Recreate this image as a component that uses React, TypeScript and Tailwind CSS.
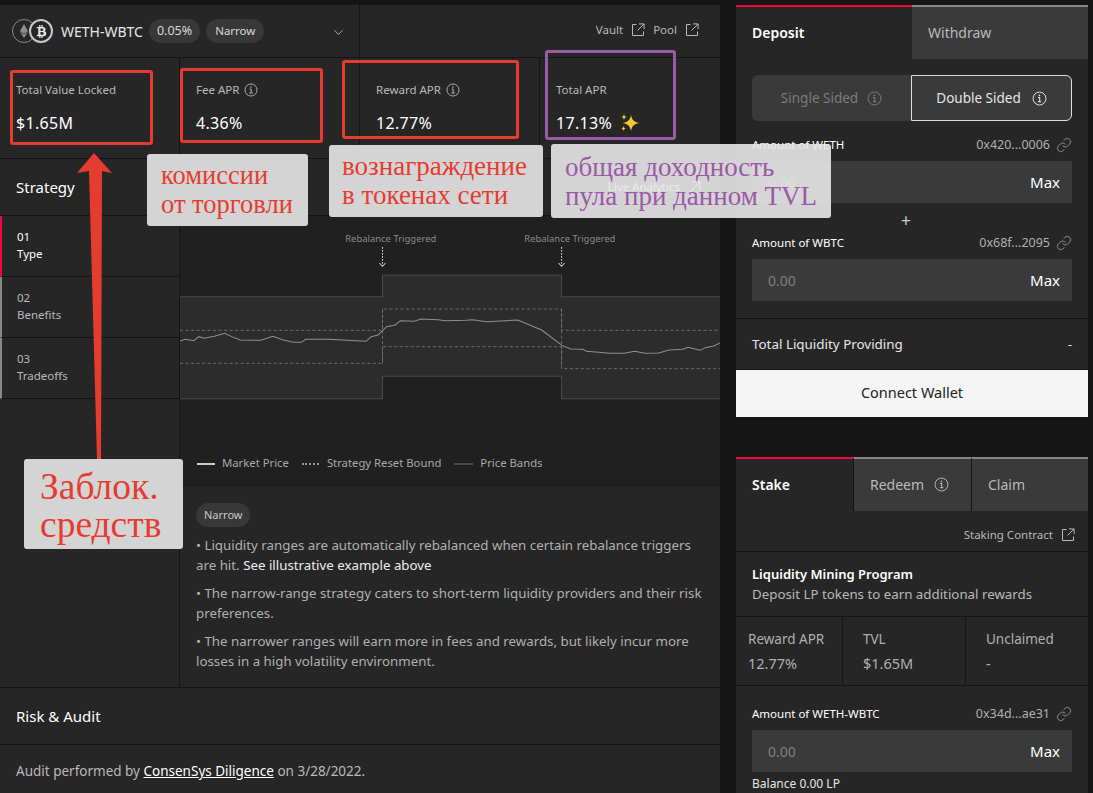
import { Link, ChevronDown } from 'lucide-react';
import { FaBtc, FaEthereum } from 'react-icons/fa';

function InfoIcon({ className = 'h-[14px] w-[14px]' }: { className?: string }) {
  return (
    <svg viewBox="0 0 16 16" fill="none" stroke="currentColor" className={`shrink-0 ${className}`}>
      <circle cx="8" cy="8" r="6.9" strokeWidth="1" />
      <path d="M6.4 7h1.8v4.2M6.2 11.4h3.8" strokeWidth="1.1" />
      <circle cx="7.9" cy="4.6" r="0.9" fill="currentColor" stroke="none" />
    </svg>
  );
}

function LaunchIcon() {
  return (
    <svg viewBox="0 0 14 14" fill="none" stroke="currentColor" strokeWidth="1" className="h-[14px] w-[14px] shrink-0">
      <path d="M5.5 1.5h-4v11h11v-4M8 .9h5.1V6M13 1 6.5 7.5" />
    </svg>
  );
}

function Sparkles() {
  return (
    <svg viewBox="0 0 22 20" className="h-[20px] w-[22px]">
      <path d="M12 2c1 5 3 7 8 8-5 1-7 3-8 8-1-5-3-7-8-8 5-1 7-3 8-8z" fill="#fbc531" />
      <path d="M5 1c.4 2 1 2.700 3 3-2 .4-2.600 1-3 3-.4-2-1-2.600-3-3 2-.3 2.600-1 3-3z" fill="#fbc531" />
      <path d="M4.500 13c.4 1.700.9 2.200 2.500 2.500-1.600.4-2.100.9-2.500 2.500-.4-1.600-.9-2.100-2.500-2.500 1.600-.3 2.100-.8 2.500-2.500z" fill="#fbc531" />
    </svg>
  );
}

function Stat({ label, value, info, extra, className = '' }: { label: string; value: string; info?: boolean; extra?: boolean; className?: string }) {
  return (
    <div className={`h-full w-[180px] border-r border-[#151515] pl-[16px] pt-[23px] ${className}`}>
      <div className="flex h-[18px] items-center gap-[5px] text-[11.5px] text-[#b9b9b9]">
        {label}
        {info && <InfoIcon />}
      </div>
      <div className="mt-[14px] flex h-[20px] items-center gap-[7px] text-[16px] tracking-[0.3px] text-white">
        {value}
        {extra && <Sparkles />}
      </div>
    </div>
  );
}

function Step({ n, label, active }: { n: string; label: string; active?: boolean }) {
  return (
    <div className={`h-[61px] border-b border-b-[#151515] border-l-2 pl-[15px] pt-[12px] text-[11.5px] leading-[17px] ${active ? 'border-l-[#f0083c] text-white' : 'border-l-[#888888] text-[#b9b9b9]'}`}>
      <div>{n}</div>
      <div>{label}</div>
    </div>
  );
}

function Tab({ label, active, info, className }: { label: string; active?: boolean; info?: boolean; className: string }) {
  return (
    <div className={`flex h-[54px] items-center gap-[10px] border-t-2 px-4 pb-[2px] text-[14px] ${active ? 'border-t-[#f0083c] font-semibold text-white' : 'border-t-[#888888] bg-[#3a3a3a] text-[#b9b9b9]'} ${className}`}>
      {label}
      {info && <InfoIcon className="h-[15px] w-[15px]" />}
    </div>
  );
}

function Amount({ label, address }: { label: string; address: string }) {
  return (
    <div>
      <div className="flex h-[18px] items-center justify-between text-[11.5px] text-white">
        <span>{label}</span>
        <span className="flex items-center gap-[6px] text-[12.5px] text-[#b0b0b0]">
          {address}
          <Link size={16} strokeWidth={1.1} />
        </span>
      </div>
      <div className="mt-[7px] flex h-[42px] items-center justify-between bg-[#3a3a3a] pl-4 pr-3 text-[14px]">
        <span className="text-[#808080]">0.00</span>
        <span className="text-[15px] text-white">Max</span>
      </div>
    </div>
  );
}

function Chart() {
  const price =
    'M0 348L15 343L40 347L55 335L70 340L100 334L130 325L150 335L175 345L235 346L270 334L300 345L330 352L352 352L365 343L430 343L540 349L555 335L575 330L600 305L625 300L640 287L680 289L700 282L750 284L770 287L830 286L850 284L890 290L980 285L1010 298L1050 315L1110 362L1135 372L1170 373L1180 379L1250 385L1290 385L1320 379L1350 385L1390 384L1420 375L1460 373L1475 367L1510 376L1525 368L1550 363L1568 354';
  return (
    <svg viewBox="0 -27 1568 672" preserveAspectRatio="none" className="block h-[224px] w-[540px]" fill="none">
      <path d="M0 215H588V151H1108V215H1568V521H1108V454H588V521H0Z" fill="#2c2c2c" />
      <path d="M0 215H588V151H1108V215H1568M0 521H588V454H1108V521H1568" stroke="#4a4a4a" strokeWidth="3" />
      <path d="M0 316H588V252H1108V316H1568M0 415H588V365H1108V431H1568M588 252V415M1108 252V431" stroke="#777777" strokeWidth="2.500" strokeDasharray="9 7" />
      <path d={price} stroke="#8f8f8f" strokeWidth="3" />
      <path d="M588 66V122M1108 66V122" stroke="#cccccc" strokeWidth="3" strokeDasharray="5 4" />
      <path d="M579 114L588 124L597 114M1099 114L1108 124L1117 114" stroke="#cccccc" strokeWidth="3" />
      <text x="612" y="52" textAnchor="middle" fill="#8a8a8a" fontSize="27.500">Rebalance Triggered</text>
      <text x="1132" y="52" textAnchor="middle" fill="#8a8a8a" fontSize="27.500">Rebalance Triggered</text>
    </svg>
  );
}

function Legend() {
  return (
    <div className="flex h-[47px] items-center gap-[13px] pl-[17px] text-[11.3px] text-[#a8a8a8]">
      <span className="flex items-center gap-[7px]"><i className="h-[2px] w-[18px] bg-[#cccccc]" />Market Price</span>
      <span className="flex items-center gap-[8px]"><i className="w-[17px] border-t-2 border-dotted border-[#999999]" />Strategy Reset Bound</span>
      <span className="flex items-center gap-[7px]"><i className="h-[2px] w-[19px] bg-[#4a4a4a]" />Price Bands</span>
    </div>
  );
}

export default function App() {
  return (
    <div className="relative flex h-[793px] w-[1093px] overflow-hidden bg-[#151515] pt-[5px] font-['Noto_Sans',sans-serif]">
      <div className="w-[720px] shrink-0 bg-[#262626]">
        <div className="flex h-[53px] border-b border-[#151515]">
          <div className="flex w-[360px] items-center border-r border-[#151515] pl-[12px] pr-[13px]">
            <div className="relative h-[24px] w-[41px]">
              <span className="absolute left-0 flex h-[24px] w-[24px] items-center justify-center rounded-full border border-[#8a8a8a] bg-[#262626] text-[#8c8c8c]"><FaEthereum size={14} /></span>
              <span className="absolute left-[17px] flex h-[24px] w-[24px] items-center justify-center rounded-full border-2 border-double border-[#c8c8c8] bg-[#262626] text-[#e6e6e6]"><FaBtc size={13} /></span>
            </div>
            <span className="ml-[8px] text-[14px] text-[#e6e6e6]">WETH-WBTC</span>
            <span className="ml-[6px] rounded-full bg-[#383838] px-[8px] py-[3px] text-[12.5px] leading-[18px] text-[#d8d8d8]">0.05%</span>
            <span className="ml-[6px] rounded-full bg-[#383838] px-[9px] py-[3px] text-[11.5px] leading-[18px] text-[#d8d8d8]">Narrow</span>
            <ChevronDown size={15} strokeWidth={1.3} className="ml-auto mt-[3px] text-[#cccccc]" />
          </div>
          <div className="flex flex-1 items-center justify-end gap-[8px] pb-[2px] pr-[21px] text-[11.5px] text-[#b9b9b9]">
            <span>Vault</span>
            <LaunchIcon />
            <span>Pool</span>
            <LaunchIcon />
          </div>
        </div>

        <div className="flex h-[101px] border-b border-[#151515]">
          <Stat label="Total Value Locked" value="$1.65M" />
          <Stat label="Fee APR" value="4.36%" info />
          <Stat label="Reward APR" value="12.77%" info />
          <Stat label="Total APR" value="17.13%" extra className="border-r-0" />
        </div>

        <div className="flex h-[57px] items-center justify-between border-b border-[#151515] pl-[16px] pr-[19px]">
          <span className="text-[15px] text-white">Strategy</span>
          <span className="flex items-center gap-[9px] text-[11.5px] text-white">
            Live Analytics
            <svg viewBox="0 0 12 12" fill="none" stroke="currentColor" strokeWidth="1" className="h-[12px] w-[12px]"><path d="M1 11 11 1M3.500 1H11V8.500" /></svg>
          </span>
        </div>

        <div className="flex h-[472px] border-b border-[#151515]">
          <div className="w-[180px] shrink-0 border-r border-[#151515]">
            <Step n="01" label="Type" active />
            <Step n="02" label="Benefits" />
            <Step n="03" label="Tradeoffs" />
          </div>
          <div className="flex flex-1 flex-col">
            <div className="bg-[#202020]">
              <Chart />
              <Legend />
            </div>
            <div className="flex-1 px-[16px] pt-[16px] text-[13.3px] leading-[20px] text-[#b0b0b0]">
              <span className="inline-block rounded-full bg-[#383838] px-[8px] py-[3px] text-[11px] leading-[18px] text-[#c8c8c8]">Narrow</span>
              <p className="mt-[8px]">• Liquidity ranges are automatically rebalanced when certain rebalance triggers are hit. <span className="text-[#eeeeee]">See illustrative example above</span></p>
              <p className="mt-[8px]">• The narrow-range strategy caters to short-term liquidity providers and their risk preferences.</p>
              <p className="mt-[8px]">• The narrower ranges will earn more in fees and rewards, but likely incur more losses in a high volatility environment.</p>
            </div>
          </div>
        </div>

        <div className="flex h-[57px] items-center border-b border-[#151515] pl-[16px] text-[15px] text-white">Risk &amp; Audit</div>
        <div className="pl-[16px] pt-[16px] text-[13.5px] leading-[20px] text-[#b9b9b9]">
          Audit performed by <span className="text-white underline">ConsenSys Diligence</span> on 3/28/2022.
        </div>
      </div>

      <div className="ml-[16px] flex w-[352px] shrink-0 flex-col gap-[40px]">
        <div className="bg-[#262626]">
          <div className="flex">
            <Tab label="Deposit" active className="w-[176px]" />
            <Tab label="Withdraw" className="w-[176px]" />
          </div>
          <div className="px-4 pt-4">
            <div className="flex h-[46px] rounded-md bg-[#3a3a3a] text-[13.5px]">
              <div className="flex flex-1 items-center justify-center gap-[9px] text-[#7c7c7c]">Single Sided <InfoIcon className="h-[15px] w-[15px]" /></div>
              <div className="flex w-[161px] items-center justify-center gap-[11px] rounded-r-md border border-[#dddddd] text-[#e6e6e6]">Double Sided <InfoIcon className="h-[15px] w-[15px]" /></div>
            </div>
            <div className="mt-[15px]"><Amount label="Amount of WETH" address="0x420...0006" /></div>
            <div className="flex h-[31px] items-center justify-center pr-[12px] pt-[2px] text-[18px] leading-none text-[#cccccc]">+</div>
            <Amount label="Amount of WBTC" address="0x68f...2095" />
          </div>
          <div className="mt-[17px] flex h-[52px] items-center justify-between border-y border-[#151515] px-4 text-[13.4px] text-[#e6e6e6]">
            <span>Total Liquidity Providing</span>
            <span>-</span>
          </div>
          <div className="flex h-[47px] items-center justify-center bg-[#f5f5f5] pb-[1px] text-[14.5px] text-[#222222]">Connect Wallet</div>
        </div>

        <div className="flex-1 bg-[#262626]">
          <div className="flex">
            <Tab label="Stake" active className="w-[117px]" />
            <Tab label="Redeem" info className="w-[118px] border-l border-l-[#151515]" />
            <Tab label="Claim" className="w-[117px] border-l border-l-[#151515]" />
          </div>
          <div className="flex h-[41px] items-center justify-end gap-[8px] border-b border-[#151515] pr-[13px] pt-[8px] text-[11.5px] text-[#b9b9b9]">
            Staking Contract <LaunchIcon />
          </div>
          <div className="h-[65px] border-b border-[#151515] px-4 pt-[12px] leading-[20px]">
            <div className="text-[13px] font-semibold text-white">Liquidity Mining Program</div>
            <div className="text-[13.3px] text-[#b9b9b9]">Deposit LP tokens to earn additional rewards</div>
          </div>
          <div className="flex h-[69px] border-b border-[#151515] text-[13.5px] leading-[24px] text-[#b0b0b0]">
            <div className="w-[107px] border-r border-[#151515] pl-[12px] pt-[10px]"><div>Reward APR</div><div className="text-[14.5px]">12.77%</div></div>
            <div className="w-[123px] border-r border-[#151515] pl-[20px] pt-[10px]"><div>TVL</div><div className="text-[14.5px]">$1.65M</div></div>
            <div className="flex-1 pl-[20px] pt-[10px]"><div>Unclaimed</div><div className="text-[14.5px]">-</div></div>
          </div>
          <div className="px-4 pt-[19px]">
            <Amount label="Amount of WETH-WBTC" address="0x34d...ae31" />
            <div className="mt-[3px] text-[12px] leading-[18px] text-[#e6e6e6]">Balance 0.00 LP</div>
          </div>
        </div>
      </div>

      {/* annotations pasted over the screenshot */}
      <div className="absolute left-[10px] top-[70px] h-[75px] w-[143px] rounded-[3px] border-[3px] border-[#e53c30]" />
      <div className="absolute left-[180px] top-[68px] h-[75px] w-[143px] rounded-[3px] border-[3px] border-[#e53c30]" />
      <div className="absolute left-[342px] top-[60px] h-[79px] w-[177px] rounded-[3px] border-[3px] border-[#e53c30]" />
      <div className="absolute left-[545px] top-[50px] h-[90px] w-[131px] rounded-[3px] border-[3px] border-[#9b59a8]" />

      <svg viewBox="0 0 40 320" className="absolute left-[75px] top-[150px] h-[320px] w-[40px]">
        <path d="M19 3 37 23 27 21 26 310H22L14 21 2 23Z" fill="#e53c30" />
      </svg>

      <div className="absolute left-[147px] top-[154px] h-[72px] w-[161px] rounded-[3px] bg-[#e8e8e8]/90 pl-[14px] pt-[7px] font-['Liberation_Serif',serif] text-[26.5px] leading-[29px] text-[#e53c30]">
        комиссии<br />от торговли
      </div>
      <div className="absolute left-[329px] top-[145px] h-[72px] w-[214px] rounded-[3px] bg-[#e8e8e8]/90 pl-[13px] pt-[7px] font-['Liberation_Serif',serif] text-[27px] leading-[29px] text-[#e53c30]">
        вознаграждение<br />в токенах сети
      </div>
      <div className="absolute left-[551px] top-[144px] h-[74px] w-[280px] rounded-[3px] bg-[#e8e8e8]/90 pl-[14px] pt-[9px] font-['Liberation_Serif',serif] text-[27px] leading-[29px] text-[#9b59a8]">
        общая доходность<br />пула при данном TVL
      </div>
      <div className="absolute left-[24px] top-[459px] h-[90px] w-[159px] rounded-[3px] bg-[#e8e8e8]/90 pl-[16px] pt-[9px] font-['Liberation_Serif',serif] text-[37.5px] leading-[38px] text-[#e53c30]">
        Заблок.<br />средств
      </div>
    </div>
  );
}
